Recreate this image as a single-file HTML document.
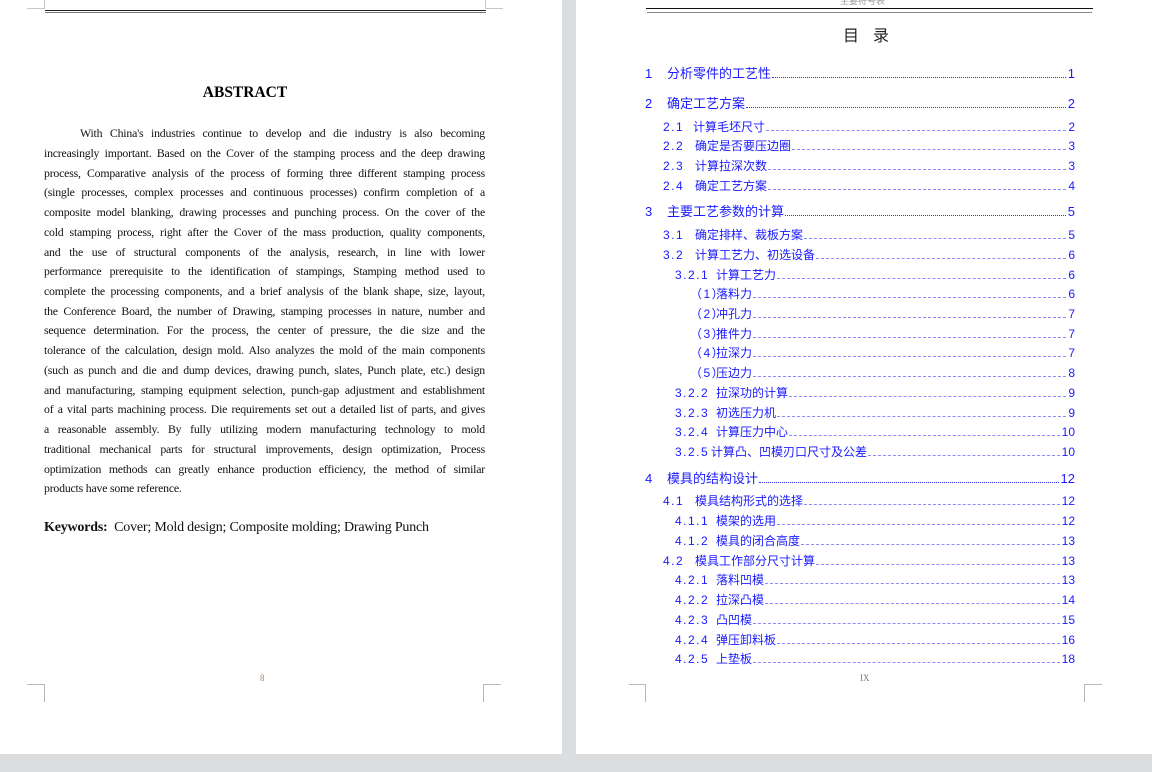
<!DOCTYPE html>
<html><head><meta charset="utf-8">
<style>
*{margin:0;padding:0;box-sizing:border-box}
body{width:1152px;height:772px;background:#dcdddf;position:relative;overflow:hidden;font-family:"Liberation Serif",serif}
.page{position:absolute;background:#fff;top:0;height:754px}
.abs{position:absolute;}
.ln{position:absolute;left:44px;width:441px;font-size:11.8px;letter-spacing:-0.2px;text-align:justify;text-align-last:justify;white-space:nowrap;color:#111;line-height:14px}
.ln.l{text-align-last:left}
.toc{position:absolute;display:flex;align-items:flex-end;color:#1a1aff;font-family:"Liberation Sans","Noto Sans CJK SC",sans-serif;font-size:12px;line-height:14px;right:77px;white-space:nowrap}
.toc .n{display:inline-block;letter-spacing:1.5px}
.toc .d{flex:1;border-bottom:1px dashed #8c8cff;margin:0 2px 3px 1px}
.toc.h .d{border-bottom:1px dotted #3030ff}
.toc.h{font-size:13px}
</style></head><body>
<div class="page" style="left:0;width:562px"></div>
<div class="page" style="left:576px;width:576px"></div>

<div class="abs" style="left:27px;top:8px;width:18px;height:1px;background:#c8c8c8"></div>
<div class="abs" style="left:44px;top:0;width:1px;height:8px;background:#c8c8c8"></div>
<div class="abs" style="left:485px;top:8px;width:18px;height:1px;background:#c8c8c8"></div>
<div class="abs" style="left:485px;top:0;width:1px;height:8px;background:#c8c8c8"></div>
<div class="abs" style="left:45px;top:10px;width:441px;height:1px;background:#222"></div>
<div class="abs" style="left:45px;top:12px;width:441px;height:1px;background:#777"></div>

<div class="abs" style="left:0;width:490px;top:84px;text-align:center;font-weight:bold;font-size:15.5px">ABSTRACT</div>

<div class="ln" style="top:126px;text-indent:36px">With China's industries continue to develop and die industry is also becoming</div>
<div class="ln" style="top:146px">increasingly important. Based on the Cover of the stamping process and the deep drawing</div>
<div class="ln" style="top:166px">process, Comparative analysis of the process of forming three different stamping process</div>
<div class="ln" style="top:185px">(single processes, complex processes and continuous processes) confirm completion of a</div>
<div class="ln" style="top:205px">composite model blanking, drawing processes and punching process. On the cover of the</div>
<div class="ln" style="top:225px">cold stamping process, right after the Cover of the mass production, quality components,</div>
<div class="ln" style="top:245px">and the use of structural components of the analysis, research, in line with lower</div>
<div class="ln" style="top:264px">performance prerequisite to the identification of stampings, Stamping method used to</div>
<div class="ln" style="top:284px">complete the processing components, and a brief analysis of the blank shape, size, layout,</div>
<div class="ln" style="top:304px">the Conference Board, the number of Drawing, stamping processes in nature, number and</div>
<div class="ln" style="top:323px">sequence determination. For the process, the center of pressure, the die size and the</div>
<div class="ln" style="top:343px">tolerance of the calculation, design mold. Also analyzes the mold of the main components</div>
<div class="ln" style="top:363px">(such as punch and die and dump devices, drawing punch, slates, Punch plate, etc.) design</div>
<div class="ln" style="top:383px">and manufacturing, stamping equipment selection, punch-gap adjustment and establishment</div>
<div class="ln" style="top:402px">of a vital parts machining process. Die requirements set out a detailed list of parts, and gives</div>
<div class="ln" style="top:422px">a reasonable assembly. By fully utilizing modern manufacturing technology to mold</div>
<div class="ln" style="top:442px">traditional mechanical parts for structural improvements, design optimization, Process</div>
<div class="ln" style="top:462px">optimization methods can greatly enhance production efficiency, the method of similar</div>
<div class="ln l" style="top:481px">products have some reference.</div>
<div class="abs" style="left:44px;top:520px;font-size:14px;white-space:nowrap;color:#111;letter-spacing:-0.2px"><b>Keywords:</b>&nbsp; Cover; Mold design; Composite molding; Drawing Punch</div>

<div class="abs" style="left:260px;top:673px;font-size:9px;color:#b08060">8</div>
<div class="abs" style="left:27px;top:684px;width:18px;height:1px;background:#b8b8b8"></div>
<div class="abs" style="left:44px;top:684px;width:1px;height:18px;background:#b8b8b8"></div>
<div class="abs" style="left:483px;top:684px;width:18px;height:1px;background:#b8b8b8"></div>
<div class="abs" style="left:483px;top:684px;width:1px;height:18px;background:#b8b8b8"></div>

<div class="abs" style="left:840px;top:-6px;font-size:9px;color:#999;font-family:'Noto Sans CJK SC',sans-serif">主要符号表</div>
<div class="abs" style="left:646px;top:8px;width:447px;height:1px;background:#111"></div>
<div class="abs" style="left:647px;top:12px;width:445px;height:1px;background:#888"></div>
<div class="abs" style="left:843px;top:22px;font-size:16px;font-family:'Noto Sans CJK SC',sans-serif;color:#222;letter-spacing:14px">目录</div>

<div class="toc h" style="left:645px;top:67px"><span class="n" style="width:22px">1</span>分析零件的工艺性<span class="d"></span>1</div>
<div class="toc h" style="left:645px;top:97px"><span class="n" style="width:22px">2</span>确定工艺方案<span class="d"></span>2</div>
<div class="toc" style="left:663px;top:120px"><span class="n" style="width:30px">2.1</span>计算毛坯尺寸<span class="d"></span>2</div>
<div class="toc" style="left:663px;top:139px"><span class="n" style="width:32px">2.2</span>确定是否要压边圈<span class="d"></span>3</div>
<div class="toc" style="left:663px;top:159px"><span class="n" style="width:32px">2.3</span>计算拉深次数<span class="d"></span>3</div>
<div class="toc" style="left:663px;top:179px"><span class="n" style="width:32px">2.4</span>确定工艺方案<span class="d"></span>4</div>
<div class="toc h" style="left:645px;top:205px"><span class="n" style="width:22px">3</span>主要工艺参数的计算<span class="d"></span>5</div>
<div class="toc" style="left:663px;top:228px"><span class="n" style="width:32px">3.1</span>确定排样、裁板方案<span class="d"></span>5</div>
<div class="toc" style="left:663px;top:248px"><span class="n" style="width:32px">3.2</span>计算工艺力、初选设备<span class="d"></span>6</div>
<div class="toc" style="left:675px;top:268px"><span class="n" style="width:41px">3.2.1</span>计算工艺力<span class="d"></span>6</div>
<div class="toc" style="left:690px;top:287px"><span class="n" style="width:26px">（1）</span>落料力<span class="d"></span>6</div>
<div class="toc" style="left:690px;top:307px"><span class="n" style="width:26px">（2）</span>冲孔力<span class="d"></span>7</div>
<div class="toc" style="left:690px;top:327px"><span class="n" style="width:26px">（3）</span>推件力<span class="d"></span>7</div>
<div class="toc" style="left:690px;top:346px"><span class="n" style="width:26px">（4）</span>拉深力<span class="d"></span>7</div>
<div class="toc" style="left:690px;top:366px"><span class="n" style="width:26px">（5）</span>压边力<span class="d"></span>8</div>
<div class="toc" style="left:675px;top:386px"><span class="n" style="width:41px">3.2.2</span>拉深功的计算<span class="d"></span>9</div>
<div class="toc" style="left:675px;top:406px"><span class="n" style="width:41px">3.2.3</span>初选压力机<span class="d"></span>9</div>
<div class="toc" style="left:675px;top:425px"><span class="n" style="width:41px">3.2.4</span>计算压力中心<span class="d"></span>10</div>
<div class="toc" style="left:675px;top:445px"><span class="n" style="width:36px">3.2.5</span>计算凸、凹模刃口尺寸及公差<span class="d"></span>10</div>
<div class="toc h" style="left:645px;top:472px"><span class="n" style="width:22px">4</span>模具的结构设计<span class="d"></span>12</div>
<div class="toc" style="left:663px;top:494px"><span class="n" style="width:32px">4.1</span>模具结构形式的选择<span class="d"></span>12</div>
<div class="toc" style="left:675px;top:514px"><span class="n" style="width:41px">4.1.1</span>模架的选用<span class="d"></span>12</div>
<div class="toc" style="left:675px;top:534px"><span class="n" style="width:41px">4.1.2</span>模具的闭合高度<span class="d"></span>13</div>
<div class="toc" style="left:663px;top:554px"><span class="n" style="width:32px">4.2</span>模具工作部分尺寸计算<span class="d"></span>13</div>
<div class="toc" style="left:675px;top:573px"><span class="n" style="width:41px">4.2.1</span>落料凹模<span class="d"></span>13</div>
<div class="toc" style="left:675px;top:593px"><span class="n" style="width:41px">4.2.2</span>拉深凸模<span class="d"></span>14</div>
<div class="toc" style="left:675px;top:613px"><span class="n" style="width:41px">4.2.3</span>凸凹模<span class="d"></span>15</div>
<div class="toc" style="left:675px;top:633px"><span class="n" style="width:41px">4.2.4</span>弹压卸料板<span class="d"></span>16</div>
<div class="toc" style="left:675px;top:652px"><span class="n" style="width:41px">4.2.5</span>上垫板<span class="d"></span>18</div>

<div class="abs" style="left:860px;top:673px;font-size:9px;color:#777">IX</div>
<div class="abs" style="left:629px;top:684px;width:17px;height:1px;background:#b8b8b8"></div>
<div class="abs" style="left:645px;top:684px;width:1px;height:18px;background:#b8b8b8"></div>
<div class="abs" style="left:1084px;top:684px;width:18px;height:1px;background:#b8b8b8"></div>
<div class="abs" style="left:1084px;top:684px;width:1px;height:18px;background:#b8b8b8"></div>
</body></html>
